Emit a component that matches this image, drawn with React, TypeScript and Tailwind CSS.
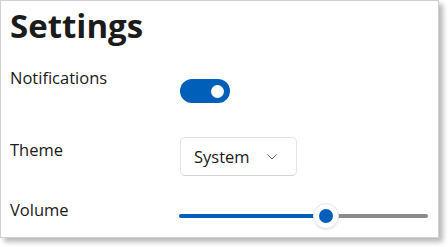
import React from 'react';

function Toggle() {
  return (
    <div className="flex h-[24px] w-[50px] items-center justify-end rounded-full bg-[#005fb8] pr-[6px]">
      <div className="h-[13px] w-[13px] rounded-full bg-white" />
    </div>
  );
}

function Combo() {
  return (
    <div className="flex h-[39px] w-[117px] items-center rounded-[5px] border border-[#e3e3e3] border-b-[#d2d2d2] bg-white pl-[13px] pr-[19px]">
      <span className="leading-6">System</span>
      <svg className="ml-auto" width="10" height="6" viewBox="0 0 10 6" fill="none">
        <polyline points="0.5,0.5 5,5 9.5,0.5" stroke="#5c5c5c" strokeWidth="1" />
      </svg>
    </div>
  );
}

function Slider() {
  return (
    <div className="relative flex h-[26px] w-[249px] items-center">
      <div className="h-[4px] w-[147px] rounded-l-full bg-[#005fb8]" />
      <div className="h-[4px] flex-1 rounded-r-full bg-[#8a8a8a]" />
      <div className="absolute left-[134px] top-0 flex h-[26px] w-[26px] items-center justify-center rounded-full border border-[#e6e6e6] bg-white shadow-[0_1px_2px_rgba(0,0,0,0.08)]">
        <div className="h-[14px] w-[14px] rounded-full bg-[#005fb8]" />
      </div>
    </div>
  );
}

export default function App() {
  return (
    <div className="min-h-screen bg-white">
      <div className="h-[238px] w-[439px] border border-[#cfcfd4] bg-white pl-[9px] font-['Open_Sans','Noto_Sans',sans-serif] text-[16.5px] text-[#1a1a1a] shadow-[4px_4px_5px_rgba(0,0,0,0.28)]">
        <h1 className="pt-[8px] text-[33px] font-bold leading-[33px] text-[#1b1b1b]">Settings</h1>

        <div className="mt-[24px] grid grid-cols-[170px_auto]">
          <div className="leading-6">Notifications</div>
          <div className="mt-[13px]">
            <Toggle />
          </div>
        </div>

        <div className="mt-[34px] grid grid-cols-[170px_auto]">
          <div className="mt-[1px] leading-6">Theme</div>
          <Combo />
        </div>

        <div className="mt-[22px] grid grid-cols-[170px_auto]">
          <div className="leading-6">Volume</div>
          <div className="mt-[5px] -ml-[1px]">
            <Slider />
          </div>
        </div>
      </div>
    </div>
  );
}
